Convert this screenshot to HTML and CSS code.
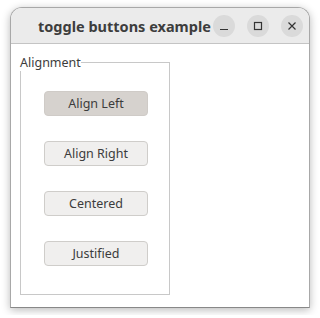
FILE: index.html
```html
<!DOCTYPE html>
<html lang="en">
<head>
  <meta charset="UTF-8">
  <title>toggle buttons example</title>
  <link rel="stylesheet" href="styles.css">
</head>
<body>
  <div class="window">
    <div class="titlebar">
      <div class="title">toggle buttons example</div>
      <div class="controls">
        <span class="ctl"><svg width="10" height="10" viewBox="0 0 10 10"><path d="M1 8.5h8" stroke="#333" stroke-width="1.2"/></svg></span>
        <span class="ctl"><svg width="10" height="10" viewBox="0 0 10 10"><rect x="1.5" y="1.5" width="7" height="7" fill="none" stroke="#333" stroke-width="1.2"/></svg></span>
        <span class="ctl"><svg width="10" height="10" viewBox="0 0 10 10"><path d="M1.5 1.5l7 7M8.5 1.5l-7 7" stroke="#333" stroke-width="1.2"/></svg></span>
      </div>
    </div>
    <div class="content">
      <fieldset class="group">
        <legend>Alignment</legend>
        <button class="toggle checked">Align Left</button>
        <button class="toggle">Align Right</button>
        <button class="toggle">Centered</button>
        <button class="toggle">Justified</button>
      </fieldset>
    </div>
  </div>
</body>
</html>
```

FILE: styles.css
```css
body {
  margin: 0;
  background: #ffffff;
  font-family: 'Noto Sans', 'Open Sans', sans-serif;
  color: #3c3c3c;
}

.window {
  margin: 7px 10px;
  width: 300px;
  height: 301px;
  box-sizing: border-box;
  background: #ffffff;
  border: 1px solid #a8a8a8;
  border-bottom-color: #888;
  border-radius: 12px 12px 0 0;
  box-shadow: 0 2px 9px rgba(0,0,0,0.28);
  overflow: hidden;
}

.titlebar {
  height: 35px;
  background: #ebebeb;
  border-bottom: 1px solid #c4c4c4;
  display: flex;
  align-items: center;
  padding-left: 27px;
  padding-right: 6px;
}

.title {
  font-weight: bold;
  font-size: 14.5px;
  color: #3d3d3d;
  flex: 1;
  white-space: nowrap;
}

.controls {
  display: flex;
  gap: 12px;
}

.ctl {
  width: 22px;
  height: 22px;
  border-radius: 50%;
  background: #dadada;
  display: flex;
  align-items: center;
  justify-content: center;
}

.content {
  padding: 10px 0 0 9px;
}

.group {
  margin: 0;
  width: 150px;
  height: 241px;
  box-sizing: border-box;
  border: 1px solid #c8c8c8;
  padding: 20px 0 0 2px;
  display: flex;
  flex-direction: column;
  align-items: center;
  gap: 25px;
}

.group legend {
  font-size: 12.5px;
  padding: 0;
  margin-left: -3px;
  color: #3c3c3c;
}

.toggle {
  width: 104px;
  height: 25px;
  font-family: inherit;
  font-size: 12.5px;
  color: #3c3c3c;
  background: #f0efee;
  border: 1px solid #cfcdca;
  border-radius: 4px;
  padding: 0;
}

.toggle.checked {
  background: #d6d2ce;
  border-color: #cfcbc7;
}
```
